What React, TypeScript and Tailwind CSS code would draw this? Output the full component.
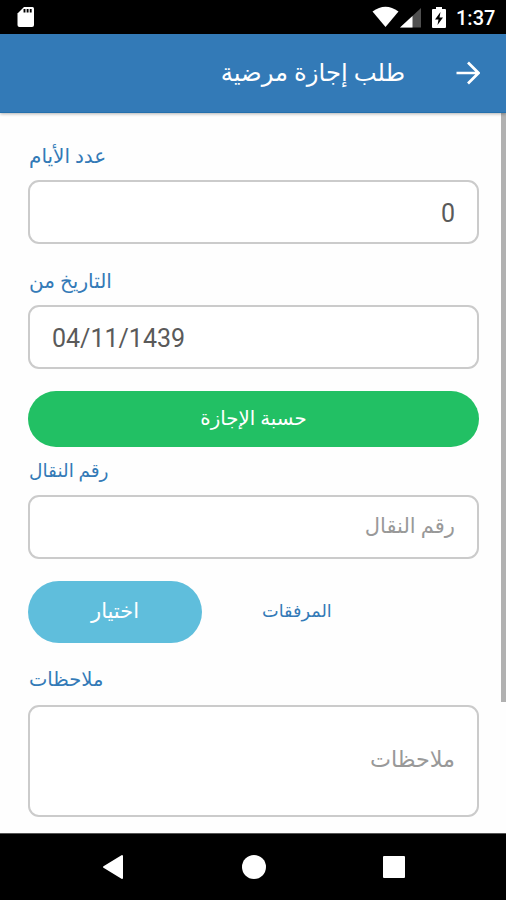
import React from "react";

const inputBox =
  "flex items-center rounded-[11px] border-2 border-[#cbcbcb] bg-white px-[22px]";
const labelText = "block whitespace-nowrap pl-px leading-[26px] text-[#337ab7]";

function StatusBar() {
  return (
    <div className="flex h-[34px] shrink-0 items-center justify-between bg-black pl-[17px] pr-[11px]">
      <svg className="h-[22px] w-[18px]" viewBox="0 0 18 22">
        <path d="M7 1h8.500Q17 1 17 2.500V19q0 2-2 2H2.500Q.5 21 .5 19V7.500z" fill="#fff" />
        <path d="M7.500 3v3.500M10.600 3v3.500M13.700 3v3.500" stroke="#000" strokeWidth="1.900" />
      </svg>
      <div className="flex items-center">
        <svg className="h-[24px] w-[76px]" viewBox="0 0 76 24">
          <path d="M.5 6.500Q13.500-3 26.500 6.500L13.500 22z" fill="#fff" />
          <path d="M49 3v19.500H28z" fill="#505050" />
          <path d="M40.500 11V22.500H28z" fill="#fff" />
          <path d="M61 4h3V2h6v2h3q1 0 1 1V22q0 1-1 1H61q-1 0-1-1V5q0-1 1-1z" fill="#fff" />
          <path d="M68.500 7L63 14.500h3.500l-1 5.500L71 12.500h-3.500z" fill="#000" />
        </svg>
        <span className="ml-[8px] w-[39px] whitespace-nowrap pt-[2px] text-[20px] font-medium leading-[24px] text-white">1:37</span>
      </div>
    </div>
  );
}

function Header() {
  return (
    <header dir="rtl" className="z-10 flex h-[79px] shrink-0 items-center border-b border-[#2470ad] bg-[#337ab7] pr-[26px] shadow-[0_1px_3px_rgba(0,0,0,0.3)]">
      <svg className="h-[24px] w-[24px]" viewBox="0 0 24 24" fill="none" stroke="#fff" strokeWidth="2.700">
        <path d="M.5 12H22M12 1.500L22.500 12 12 22.500" />
      </svg>
      <h1 className="mr-[51px] whitespace-nowrap text-[24.300px] font-normal leading-[32px] text-white">طلب إجازة مرضية</h1>
    </header>
  );
}

function NavBar() {
  return (
    <nav className="flex h-[67px] shrink-0 items-center justify-between border-t border-[#555] bg-black pl-[102px] pr-[101px]">
      <svg className="h-[26px] w-[22px]" viewBox="0 0 22 26">
        <path d="M20 2v22L2 13z" fill="#fff" stroke="#fff" strokeWidth="2" strokeLinejoin="round" />
      </svg>
      <div className="size-[24px] rounded-full bg-white" />
      <div className="size-[22px] rounded-[1px] bg-white" />
    </nav>
  );
}

export default function App() {
  return (
    <div className="flex h-[900px] w-[506px] flex-col overflow-hidden bg-[#fefefe] font-[Roboto,'DejaVu_Sans',sans-serif]">
      <StatusBar />
      <Header />
      <main className="flex h-[720px] shrink-0 justify-between pl-[28px]">
        <div className="flex w-[451px] flex-col pt-[30px]">
          <label className={`${labelText} text-[20px]`}>عدد الأيام</label>
          <div className={`${inputBox} mt-[11px] h-[64px] justify-end pt-[3px] text-[25px] text-[#5a5a5a]`}>0</div>
          <label className={`${labelText} mt-[24px] text-[20px]`}>التاريخ من</label>
          <div className={`${inputBox} mt-[11px] h-[64px] pt-[3px] text-[25px] text-[#5a5a5a]`}>04/11/1439</div>
          <button className="mt-[22px] flex h-[56px] items-center justify-center rounded-full bg-[#22c064] pb-[1px] text-[19.800px] text-white">حسبة الإجازة</button>
          <label className={`${labelText} mt-[11px] text-[18.500px]`}>رقم النقال</label>
          <div className={`${inputBox} mt-[11px] h-[64px] justify-end pb-[1px] text-[21px] text-[#999]`}>رقم النقال</div>
          <div className="mt-[22px] flex items-center">
            <button className="flex h-[62px] w-[174px] items-center justify-center rounded-full bg-[#5fbedc] pb-[1px] text-[21px] text-white">اختيار</button>
            <span className={`${labelText} mb-[3px] ml-[59px] text-[17.700px]`}>المرفقات</span>
          </div>
          <label className={`${labelText} mt-[24px] text-[19.500px]`}>ملاحظات</label>
          <div className={`${inputBox} mt-[12px] h-[112px] justify-end pb-[3px] text-[22.300px] text-[#999]`}>ملاحظات</div>
        </div>
        <div className="h-[589px] w-[5px] bg-[#b1b1b1]" />
      </main>
      <NavBar />
    </div>
  );
}
